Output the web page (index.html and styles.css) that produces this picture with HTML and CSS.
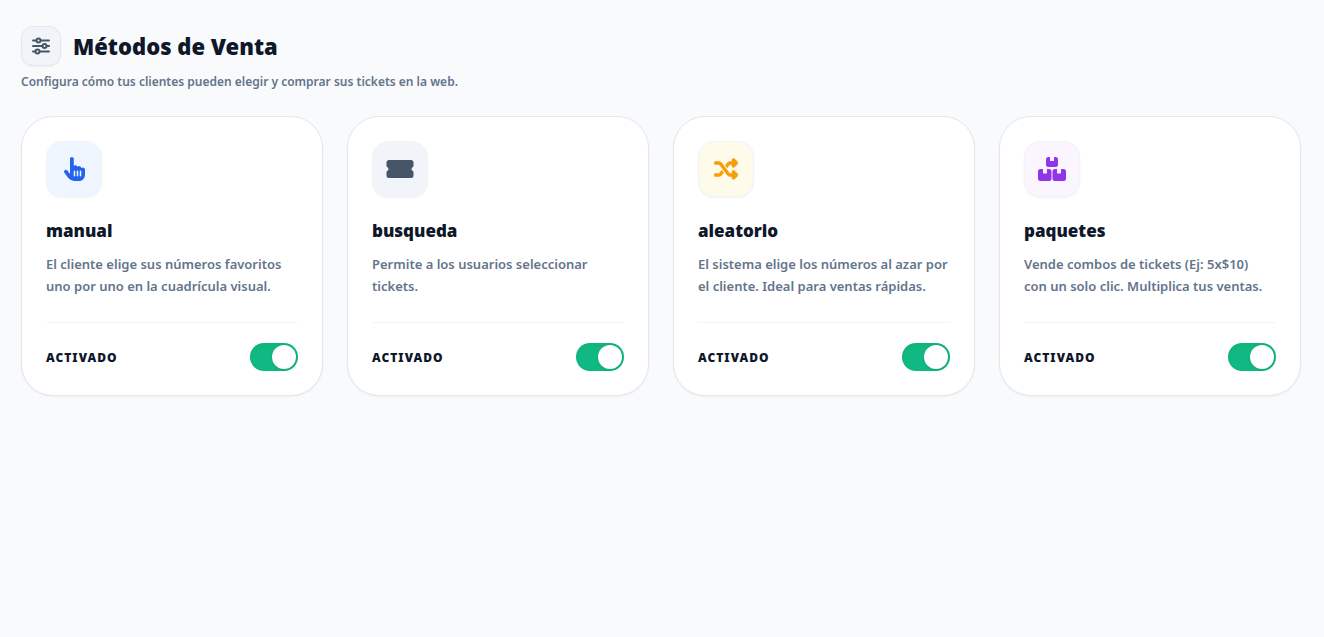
FILE: index.html
```html
<!DOCTYPE html>
<html lang="es">
<head>
  <meta charset="UTF-8">
  <meta name="viewport" content="width=device-width, initial-scale=1">
  <title>Métodos de Venta</title>
  <link rel="stylesheet" href="styles.css">
</head>
<body>
  <header class="header">
    <div class="title-row">
      <span class="title-icon">
        <svg width="20" height="20" viewBox="0 0 20 20" fill="none" stroke="currentColor" stroke-width="2" stroke-linecap="round" aria-hidden="true">
          <path d="M2 4.500h3M10 4.500h8M2 10h9M16 10h2M2 15.500h2M9 15.500h9"/>
          <circle cx="7.500" cy="4.500" r="2"/>
          <circle cx="13.500" cy="10" r="2"/>
          <circle cx="6.500" cy="15.500" r="2"/>
        </svg>
      </span>
      <h1 class="title">Métodos de Venta</h1>
    </div>
    <p class="subtitle">Configura cómo tus clientes pueden elegir y comprar sus tickets en la web.</p>
  </header>

  <main class="cards">
    <section class="card">
      <div class="card-icon blue">
        <svg width="21" height="24" viewBox="0 0 448 512" fill="currentColor" aria-hidden="true">
          <path d="M128 40c0-22.100 17.900-40 40-40s40 17.900 40 40V188.200c8.500-7.600 19.700-12.200 32-12.200c20.600 0 38.200 13 45 31.200c8.800-9.300 21.200-15.200 35-15.200c25.300 0 46 19.500 47.900 44.300c8.500-7.700 19.800-12.300 32.100-12.300c26.500 0 48 21.500 48 48v112c0 70.700-57.300 128-128 128H234.700c-5 0-9.900-.3-14.700-1c-55.300-5.600-106.200-34-140-79L8 336c-13.300-17.700-9.700-42.700 8-56s42.700-9.700 56 8l56 74.700V40zM240 304c0-8.800-7.200-16-16-16s-16 7.200-16 16v96c0 8.800 7.200 16 16 16s16-7.200 16-16V304zm48-16c-8.800 0-16 7.200-16 16v96c0 8.800 7.200 16 16 16s16-7.200 16-16V304c0-8.800-7.200-16-16-16zm80 16c0-8.800-7.200-16-16-16s-16 7.200-16 16v96c0 8.800 7.200 16 16 16s16-7.200 16-16V304z"/>
        </svg>
      </div>
      <h2 class="card-title">manual</h2>
      <p class="card-text">El cliente elige sus números favoritos uno por uno en la cuadrícula visual.</p>
      <label class="card-footer">
        <span class="state">Activado</span>
        <input class="switch" type="checkbox" role="switch" checked>
      </label>
    </section>

    <section class="card">
      <div class="card-icon slate">
        <svg width="28" height="24" viewBox="0 0 28 24" fill="currentColor" aria-hidden="true">
          <path d="M3 3h22a2.500 2.500 0 0 1 2.500 2.500V9q0 .6-.6.900a2.300 2.300 0 0 0 0 4.200q.6.300.6.900v3.500A2.500 2.500 0 0 1 25 21H3a2.500 2.500 0 0 1-2.500-2.500V15q0-.6.600-.9a2.300 2.300 0 0 0 0-4.200Q.5 9.600.5 9V5.500A2.500 2.500 0 0 1 3 3z"/>
        </svg>
      </div>
      <h2 class="card-title">busqueda</h2>
      <p class="card-text">Permite a los usuarios seleccionar tickets.</p>
      <label class="card-footer">
        <span class="state">Activado</span>
        <input class="switch" type="checkbox" role="switch" checked>
      </label>
    </section>

    <section class="card">
      <div class="card-icon amber">
        <svg width="24" height="24" viewBox="0 0 512 512" fill="currentColor" stroke="currentColor" stroke-width="12" aria-hidden="true">
          <path d="M403.800 34.400c12-5 25.700-2.200 34.900 6.900l64 64c6 6 9.400 14.100 9.400 22.600s-3.400 16.600-9.400 22.600l-64 64c-9.200 9.200-22.900 11.900-34.900 6.900s-19.800-16.600-19.800-29.600V160H352c-10.100 0-19.600 4.700-25.600 12.800L284 229.300 244 176l31.200-41.600C293.300 110.200 321.800 96 352 96h32V64c0-12.900 7.800-24.600 19.800-29.600zM164 282.700L204 336l-31.200 41.600C154.700 401.800 126.200 416 96 416H32c-17.700 0-32-14.300-32-32s14.300-32 32-32H96c10.100 0 19.600-4.700 25.600-12.800L164 282.700zm274.600 188c-9.200 9.200-22.900 11.900-34.900 6.900s-19.800-16.600-19.800-29.600V416H352c-30.200 0-58.700-14.200-76.800-38.400L121.600 172.800c-6-8.100-15.500-12.800-25.600-12.800H32c-17.700 0-32-14.300-32-32s14.300-32 32-32H96c30.200 0 58.700 14.200 76.800 38.400L326.400 339.200c6 8.100 15.500 12.800 25.600 12.800h32V320c0-12.900 7.800-24.600 19.800-29.600s25.700-2.200 34.900 6.900l64 64c6 6 9.400 14.100 9.400 22.600s-3.400 16.600-9.400 22.600l-64 64z"/>
        </svg>
      </div>
      <h2 class="card-title">aleatorio</h2>
      <p class="card-text">El sistema elige los números al azar por el cliente. Ideal para ventas rápidas.</p>
      <label class="card-footer">
        <span class="state">Activado</span>
        <input class="switch" type="checkbox" role="switch" checked>
      </label>
    </section>

    <section class="card">
      <div class="card-icon purple">
        <svg width="28" height="24" viewBox="0 0 28 24" fill="currentColor" aria-hidden="true">
          <path d="M10.500 0H12v3.500q0 .5.500.5h3q.5 0 .5-.5V0h1.500A2.500 2.500 0 0 1 20 2.500v5a2.500 2.500 0 0 1-2.500 2.500h-7A2.500 2.500 0 0 1 8 7.500v-5A2.500 2.500 0 0 1 10.500 0z"/>
          <path d="M2.500 12H5v4q0 .5.500.5h3q.5 0 .5-.5v-4h2a2.500 2.500 0 0 1 2.500 2.500v7A2.500 2.500 0 0 1 11 24H2.500A2.500 2.500 0 0 1 0 21.500v-7A2.500 2.500 0 0 1 2.500 12z"/>
          <path d="M17 12h2v4q0 .5.500.5h3q.5 0 .5-.5v-4h2.500a2.500 2.500 0 0 1 2.500 2.500v7a2.500 2.500 0 0 1-2.500 2.500H17a2.500 2.500 0 0 1-2.500-2.500v-7A2.500 2.500 0 0 1 17 12z"/>
        </svg>
      </div>
      <h2 class="card-title">paquetes</h2>
      <p class="card-text">Vende combos de tickets (Ej: 5x$10) con&nbsp;un solo clic. Multiplica tus ventas.</p>
      <label class="card-footer">
        <span class="state">Activado</span>
        <input class="switch" type="checkbox" role="switch" checked>
      </label>
    </section>
  </main>
</body>
</html>
```
FILE: styles.css
```css
* {
  margin: 0;
  padding: 0;
  box-sizing: border-box;
}

body {
  padding: 26px 23px 26px 21px;
  font-family: "Segoe UI", "Noto Sans", sans-serif;
  font-size: 13px;
  font-weight: 600;
  background: #f8fafc;
  color: #0f172a;
}

/* Header */
.header {
  margin-bottom: 24px;
}

.title-row {
  display: flex;
  align-items: center;
  gap: 12px;
  margin-bottom: 6px;
}

.title-icon {
  display: flex;
  align-items: center;
  justify-content: center;
  width: 40px;
  height: 40px;
  border: 1px solid #e2e8f0;
  border-radius: 12px;
  background: #f1f5f9;
  color: #475569;
  box-shadow: 0 1px 2px rgba(0, 0, 0, 0.05);
}

.title {
  font-size: 22px;
  font-weight: 900;
  line-height: 32px;
}

.subtitle {
  font-size: 12px;
  line-height: 20px;
  color: #64748b;
}

/* Cards */
.cards {
  display: grid;
  grid-template-columns: repeat(4, 1fr);
  gap: 24px;
}

.card {
  display: flex;
  flex-direction: column;
  padding: 24px;
  border: 1px solid #e2e8f0;
  border-radius: 32px;
  background: #ffffff;
  box-shadow: 0 1px 2px rgba(0, 0, 0, 0.05);
}

.card-icon {
  display: flex;
  align-items: center;
  justify-content: center;
  width: 56px;
  height: 56px;
  margin-bottom: 20px;
  border: 1px solid #f1f5f9;
  border-radius: 16px;
  box-shadow: 0 1px 2px rgba(0, 0, 0, 0.05);
}

.card-icon.blue {
  background: #eff6ff;
  color: #2563eb;
}

.card-icon.slate {
  background: #f1f5f9;
  color: #475569;
}

.card-icon.amber {
  background: #fffbeb;
  color: #f59e0b;
}

.card-icon.purple {
  background: #faf5ff;
  color: #9333ea;
}

.card-title {
  margin-bottom: 8px;
  font-size: 17px;
  font-weight: 900;
  line-height: 28px;
}

.card-text {
  flex: 1;
  margin-bottom: 25px;
  line-height: 22px;
  color: #64748b;
}

.card-footer {
  display: flex;
  align-items: center;
  justify-content: space-between;
  padding-top: 20px;
  border-top: 1px solid #f1f5f9;
  cursor: pointer;
}

.state {
  font-size: 12px;
  font-weight: 900;
  letter-spacing: 1px;
  text-transform: uppercase;
}

/* Toggle */
.switch {
  appearance: none;
  display: flex;
  width: 48px;
  height: 28px;
  padding: 2px;
  border-radius: 14px;
  background: #cbd5e1;
  box-shadow: inset 0 2px 4px rgba(0, 0, 0, 0.05);
  cursor: pointer;
}

.switch::before {
  content: "";
  width: 24px;
  height: 24px;
  border-radius: 50%;
  background: #ffffff;
  box-shadow: 0 1px 3px rgba(0, 0, 0, 0.1);
}

.switch:checked {
  justify-content: flex-end;
  background: #10b981;
}
```
